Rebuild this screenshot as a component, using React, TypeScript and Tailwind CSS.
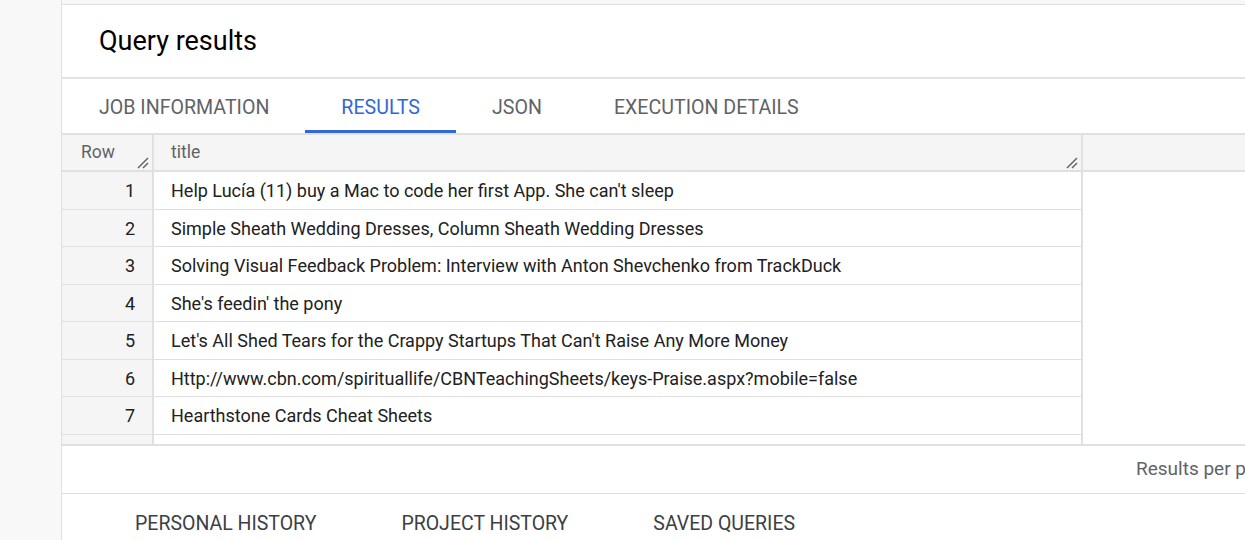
import React from "react";

const rows = [
  "Help Lucía (11) buy a Mac to code her first App. She can't sleep",
  "Simple Sheath Wedding Dresses, Column Sheath Wedding Dresses",
  "Solving Visual Feedback Problem: Interview with Anton Shevchenko from TrackDuck",
  "She's feedin' the pony",
  "Let's All Shed Tears for the Crappy Startups That Can't Raise Any More Money",
  "Http://www.cbn.com/spirituallife/CBNTeachingSheets/keys-Praise.aspx?mobile=false",
  "Hearthstone Cards Cheat Sheets",
];

function Grip() {
  return (
    <svg width="12" height="12" viewBox="0 0 12 12" className="absolute right-[3px] bottom-[1px]">
      <path d="M1 11 L11 1" stroke="#616161" strokeWidth="1.4" />
      <path d="M6 11 L11 6" stroke="#616161" strokeWidth="1.4" />
    </svg>
  );
}

export default function App() {
  const heights = ["h-[38px]", "h-[37px]", "h-[38px]", "h-[37px]", "h-[38px]", "h-[37px]", "h-[38px]"];
  return (
    <div
      className="flex h-[540px] w-[1245px] overflow-hidden bg-white"
      style={{ fontFamily: "Roboto, 'Liberation Sans', sans-serif" }}
    >
      <div className="w-[62px] shrink-0 border-r border-[#e0e0e0] bg-[#f8f8f8]" />
      <div className="flex min-w-0 flex-1 flex-col">
        <div className="h-[5px] shrink-0 border-b border-[#e0e0e0] bg-[#f8f8f8]" />
        <div className="flex h-[74px] shrink-0 items-center border-b-2 border-[#e4e4e4] pl-[37px]">
          <span className="text-[27px] text-[#000]">Query results</span>
        </div>
        <div className="flex h-[54px] shrink-0 items-stretch pl-px">
          {["JOB INFORMATION", "RESULTS", "JSON", "EXECUTION DETAILS"].map((t) => (
            <div
              key={t}
              className={
                t === "RESULTS"
                  ? "flex items-center border-b-[3px] border-[#3367d6] px-[36px] pt-[6px] text-[19.6px] font-normal text-[#3367d6]"
                  : "flex items-center border-b-[3px] border-transparent px-[36px] pt-[6px] text-[19.6px] font-normal text-[#5f6368]"
              }
            >
              {t}
            </div>
          ))}
        </div>
        {/* table */}
        <div className="flex h-[313px] shrink-0 flex-col overflow-hidden border-t-2 border-b-2 border-[#e0e0e0]">
          <div className="flex h-[37px] shrink-0 border-b-2 border-[#e0e0e0] bg-[#f5f5f5]">
            <div className="relative flex w-[90px] shrink-0 items-center pl-[19px] text-[17.5px] text-[#5f6368]">
              Row
              <Grip />
            </div>
            <div className="relative flex w-[931px] shrink-0 items-center border-l-2 border-r-2 border-[#e0e0e0] pl-[17px] text-[17.5px] text-[#5f6368]">
              title
              <Grip />
            </div>
            <div className="flex-1" />
          </div>
          <div className="flex flex-1">
            <div className="flex w-[1021px] shrink-0 flex-col">
              {rows.map((r, i) => (
                <div key={i} className={`flex ${heights[i]} shrink-0 border-b border-[#e0e0e0]`}>
                  <div className="flex w-[90px] shrink-0 items-center justify-end bg-[#f5f5f5] pr-[17px] text-[18px] text-[#212121]">
                    {i + 1}
                  </div>
                  <div className="flex flex-1 items-center whitespace-nowrap border-l-2 border-r-2 border-[#e0e0e0] pl-[17px] text-[18px] text-[#212121]">
                    {r}
                  </div>
                </div>
              ))}
              <div className="flex flex-1">
                <div className="w-[90px] shrink-0 bg-[#f5f5f5]" />
                <div className="flex-1 border-l-2 border-r-2 border-[#e0e0e0]" />
              </div>
            </div>
            <div className="flex-1" />
          </div>
        </div>
        <div className="flex h-[48px] shrink-0 items-center whitespace-nowrap border-b border-[#e0e0e0] pl-[1074px] text-[19px] text-[#5f6368]">
          Results per page:
        </div>
        <div className="flex flex-1 items-start gap-[85px] pt-[15px] pl-[73px] text-[19.5px] font-normal text-[#3c4043]">
          <span>PERSONAL HISTORY</span>
          <span>PROJECT HISTORY</span>
          <span>SAVED QUERIES</span>
        </div>
      </div>
    </div>
  );
}
